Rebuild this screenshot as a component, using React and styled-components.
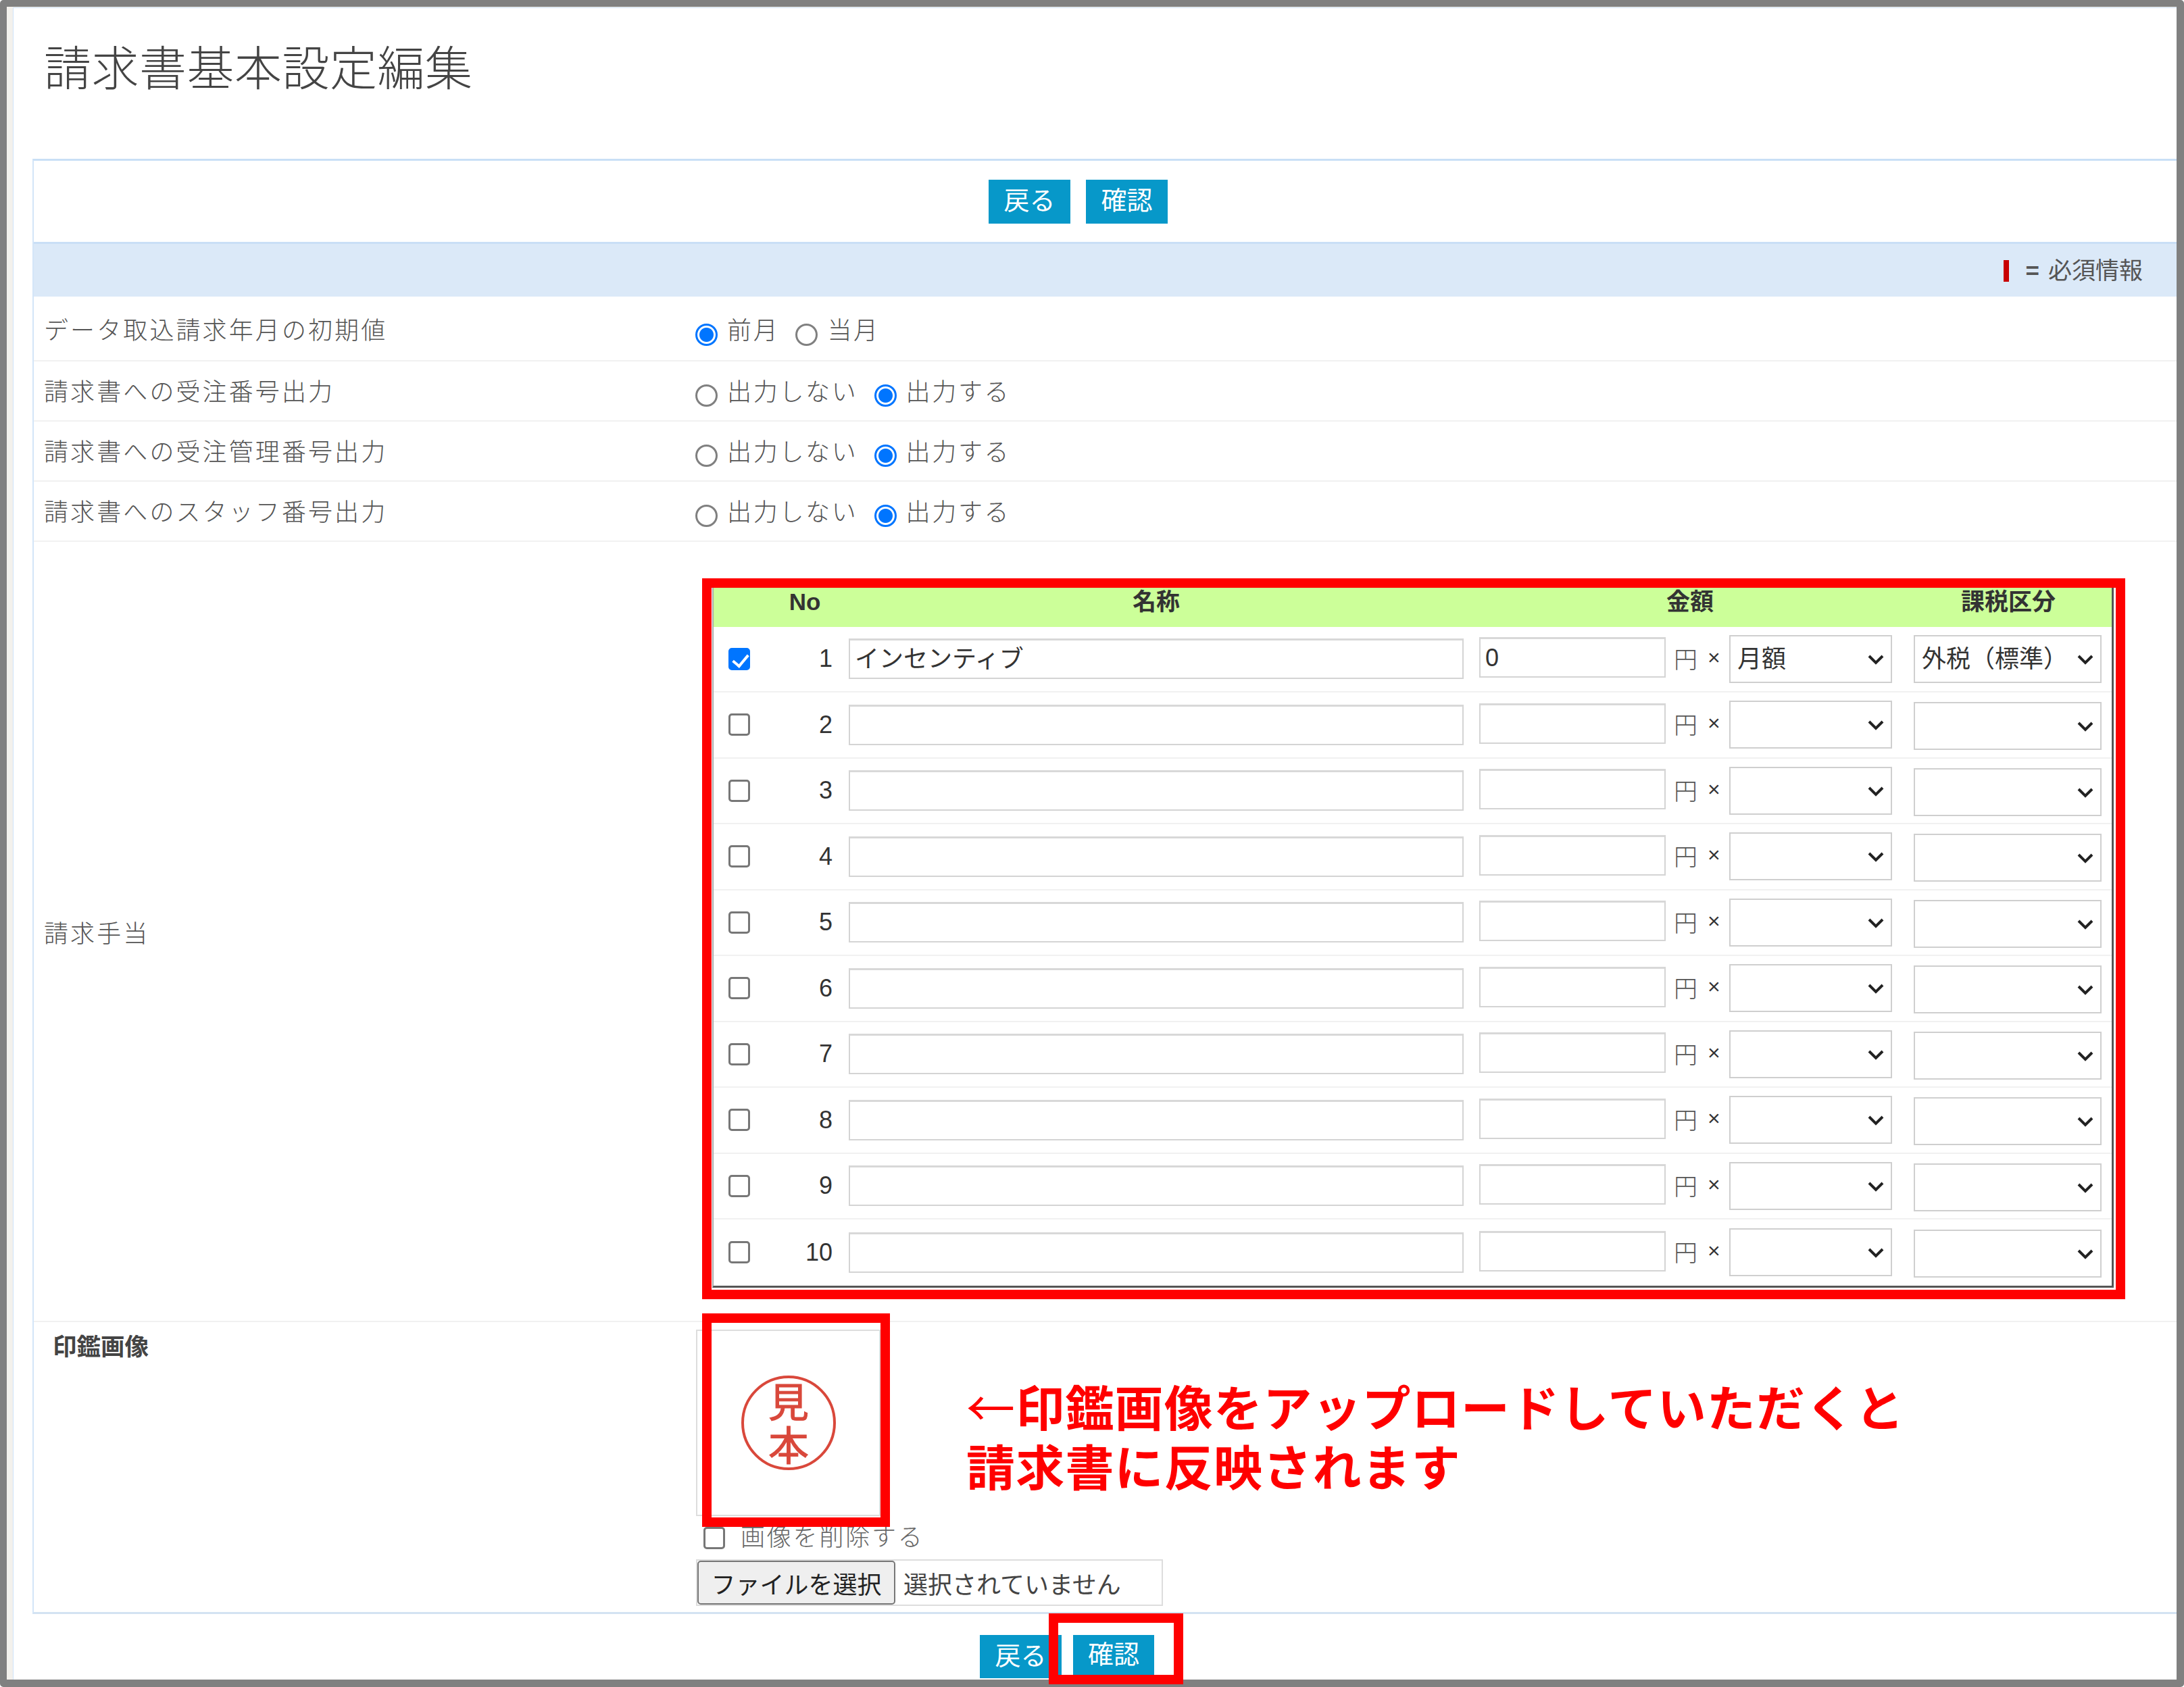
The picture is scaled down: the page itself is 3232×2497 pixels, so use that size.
import styled, { createGlobalStyle } from "styled-components";

const GlobalStyle = createGlobalStyle`
  html, body {
    margin: 0;
    padding: 0;
    background: #fff;
  }
  body {
    font-family: "Liberation Sans", "Noto Sans CJK JP", sans-serif;
    color: #555;
  }
  * {
    box-sizing: border-box;
  }
`;

const Frame = styled.div`
  width: 3232px;
  height: 2497px;
  background: #fff;
  border: solid #808080;
  border-width: 10px 11px 11px 10px;
  border-radius: 5px;
`;

const Stripe = styled.div`
  height: 100%;
  border-left: 9px solid #f3f1ec;
  border-top: 1px solid #f3f1ec;
`;

const Sheet = styled.div`
  height: 100%;
  border-left: 1px solid #cfe3f8;
  border-top: 1px solid #cfe3f8;
`;

const Title = styled.h1`
  margin: 0 0 41px;
  padding-left: 45px;
  height: 182px;
  line-height: 182px;
  font-size: 70px;
  letter-spacing: 0.5px;
  font-weight: 300;
  color: #444;
`;

const Panel = styled.section`
  margin-left: 28px;
  border-left: 2px solid #d3e5f8;
  border-top: 3px solid #c9dff6;
  border-bottom: 3px solid #d3e3f2;
`;

const ActionBar = styled.div`
  height: 120px;
  padding: 28px 0 0 1413px;
  display: flex;
  gap: 23px;
  align-items: flex-start;
`;

const ActionButton = styled.button`
  width: ${(p) => p.$width || 121}px;
  height: ${(p) => p.$height || 65}px;
  padding: 0 0 3px;
  border: none;
  background: #0798c9;
  color: #fff;
  font-family: inherit;
  font-size: 38px;
  line-height: 1;
`;

const RequiredBar = styled.div`
  height: 81px;
  padding: 2px 50px 0 0;
  background: #dbe9f8;
  border-top: 3px solid #c9dff6;
  display: flex;
  align-items: center;
  justify-content: flex-end;
  font-size: 35px;
  color: #555;
`;

const RequiredMark = styled.span`
  width: 8px;
  height: 32px;
  margin-right: 25px;
  background: #c80000;
`;

const RequiredText = styled.span`
  margin-bottom: 8px;
`;

const Equals = styled.span`
  margin-right: 13px;
  font-weight: 700;
`;

const FormRow = styled.div`
  display: grid;
  grid-template-columns: 979px 1fr;
  align-items: center;
  height: ${(p) => (p.$first ? 96 : 89)}px;
  padding-top: ${(p) => (p.$first ? 4 : 0)}px;
  padding-bottom: 4px;
  border-bottom: 2px solid #f1f1f1;
`;

const RowLabel = styled.div`
  padding-left: 15px;
  font-size: 36px;
  letter-spacing: 3.1px;
  font-weight: 300;
  color: #555;
  white-space: nowrap;
`;

const ChoiceList = styled.div`
  display: flex;
  align-items: center;
`;

const Radio = styled.input.attrs({ type: "radio" })`
  appearance: none;
  width: 33px;
  height: 33px;
  margin: 18px 14px 0 0;
  flex: none;
  border: 3px solid #808080;
  border-radius: 50%;
  background: #fff;

  &:checked {
    border-color: #0075ff;
    background: radial-gradient(circle, #0075ff 0 10px, #fff 11px);
  }
`;

const ChoiceText = styled.span`
  margin-right: 24px;
  font-size: 36px;
  letter-spacing: 2.7px;
  font-weight: 300;
  color: #555;
  white-space: nowrap;
`;

const AllowanceRow = styled.div`
  display: grid;
  grid-template-columns: 979px 1fr;
  align-items: center;
  height: 1155px;
  border-bottom: 2px solid #f1f1f1;
`;

const RedBox = styled.div`
  margin: 53px 0 32px 10px;
  width: 2106px;
  height: 1067px;
  border: 14px solid #ff0000;
`;

const FeeTable = styled.div`
  margin-left: 1px;
  width: 2074px;
  height: 1036px;
  border-left: 2px solid #aaa;
  border-right: 3px solid #555;
  border-bottom: 3px solid #555;
`;

const gridColumns = "94px 82px 934px 299px 94px 241px 310px";

const HeaderRow = styled.div`
  display: grid;
  grid-template-columns: ${gridColumns};
  height: 58px;
  padding-bottom: 16px;
  align-items: center;
  background: #ccff99;
  font-size: 35px;
  line-height: 1;
  font-weight: 700;
  color: #333;
`;

const HeaderCell = styled.div`
  grid-column: ${(p) => p.$col};
  padding-left: ${(p) => p.$pad || 0}px;
  text-align: center;
`;

const FeeRow = styled.div`
  display: grid;
  grid-template-columns: ${gridColumns};
  align-items: center;
  height: 97.5px;
  border-bottom: ${(p) => (p.$last ? "none" : "2px solid #f1f1f1")};
`;

const Check = styled.input.attrs({ type: "checkbox" })`
  appearance: none;
  position: relative;
  width: 32px;
  height: 33px;
  margin: 0 0 0 22px;
  flex: none;
  border: 3px solid #777;
  border-radius: 5px;
  background: #fff;

  &:checked {
    border-color: #0075ff;
    background: #0075ff;
  }

  &:checked::after {
    content: "";
    position: absolute;
    left: 8px;
    top: 2px;
    width: 10px;
    height: 19px;
    border: solid #fff;
    border-width: 0 4px 4px 0;
    transform: rotate(40deg);
  }
`;

const RowNumber = styled.div`
  text-align: right;
  font-size: 36px;
  color: #333;
`;

const TextField = styled.input`
  display: block;
  width: calc(100% - ${(p) => p.$pad}px);
  height: 60px;
  margin-left: ${(p) => p.$pad}px;
  padding: 0 0 8px 7px;
  border: 2px solid #d4d4d4;
  border-top: 3px solid #d8d8d8;
  border-radius: 0;
  outline: none;
  background: #fff;
  font-family: inherit;
  font-size: 36px;
  color: #333;
`;

const AmountField = styled(TextField)`
  margin-bottom: 4px;
  padding-bottom: 0;
`;

const YenCell = styled.div`
  display: flex;
  align-items: center;
  padding: 0 0 4px 12px;
  font-size: 35px;
  font-weight: 300;
  color: #555;
`;

const Times = styled.span`
  margin-left: 15px;
  font-size: 32px;
  font-weight: 400;
  color: #333;
`;

const SelectWrap = styled.div`
  position: relative;
  margin-left: ${(p) => p.$pad || 0}px;
  margin-top: ${(p) => p.$drop || 0}px;
`;

const Select = styled.select`
  display: block;
  width: 100%;
  height: 71px;
  padding: 0 0 0 10px;
  border: 2px solid #cfcfcf;
  border-radius: 0;
  outline: none;
  appearance: none;
  background: #fff;
  font-family: inherit;
  font-size: 36px;
  color: #333;
`;

const Chevron = styled.svg`
  position: absolute;
  top: 28px;
  right: 12px;
  width: 24px;
  height: 16px;
  pointer-events: none;
`;

const StampRow = styled.div`
  display: grid;
  grid-template-columns: 979px 1fr;
  align-items: start;
  height: 429px;
`;

const StampLabel = styled.div`
  padding: 8px 0 0 28px;
  font-size: 35.5px;
  font-weight: 700;
  color: #444;
`;

const StampCell = styled.div`
  padding-top: 11px;
`;

const StampTop = styled.div`
  display: flex;
  align-items: center;
`;

const StampBox = styled.div`
  position: relative;
  width: 273px;
  height: 276px;
  margin-left: 1px;
  border: 2px solid #ddd;
  display: flex;
  align-items: center;
  justify-content: center;
`;

const StampHighlight = styled.div`
  position: absolute;
  left: 7px;
  top: -26px;
  width: 278px;
  height: 316px;
  border: 14px solid #ff0000;
  z-index: 2;
`;

const StampSvg = styled.svg`
  width: 142px;
  height: 142px;
  overflow: visible;
`;

const StampText = styled.text`
  font-family: "Noto Sans CJK JP", sans-serif;
  font-size: 60px;
  fill: #d9483b;
  stroke: #d9483b;
  stroke-width: 1px;
  text-anchor: middle;
`;

const Annotation = styled.div`
  margin: 36px 0 0 127px;
  font-family: "Noto Sans CJK JP", sans-serif;
  font-size: 72px;
  line-height: 88px;
  letter-spacing: 1.2px;
  font-weight: 700;
  color: #ff0000;
  white-space: nowrap;
`;

const ArrowGlyph = styled.span`
  font-weight: 400;
`;

const DeleteLine = styled.label`
  display: flex;
  align-items: center;
  height: 34px;
  margin: 15px 0 15px 12px;
  font-size: 36px;
  letter-spacing: 2.8px;
  font-weight: 300;
  color: #666;
`;

const DeleteText = styled.span`
  margin-bottom: 8px;
`;

const DeleteCheck = styled(Check)`
  margin: 0 23px 0 0;
`;

const FilePicker = styled.div`
  display: flex;
  align-items: center;
  width: 691px;
  height: 69px;
  margin-left: 1px;
  border: 2px solid #ddd;
  font-size: 36px;
  color: #444;
`;

const FileButton = styled.button`
  width: 293px;
  height: 65px;
  margin-right: 12px;
  padding: 0;
  border: 2px solid #777;
  border-radius: 5px;
  background: #efefef;
  font-family: inherit;
  font-size: 36px;
  color: #222;
`;

const Footer = styled.div`
  display: flex;
  gap: 17px;
  padding: 31px 0 0 1430px;
`;

const ConfirmSlot = styled.div`
  position: relative;
`;

const ConfirmHighlight = styled.div`
  position: absolute;
  left: -36px;
  top: -32px;
  width: 199px;
  height: 105px;
  border: 14px solid #ff0000;
  z-index: 2;
`;

const settings = [
  { label: "データ取込請求年月の初期値", choices: ["前月", "当月"], picked: 0 },
  { label: "請求書への受注番号出力", choices: ["出力しない", "出力する"], picked: 1 },
  { label: "請求書への受注管理番号出力", choices: ["出力しない", "出力する"], picked: 1 },
  { label: "請求書へのスタッフ番号出力", choices: ["出力しない", "出力する"], picked: 1 },
];

const DownArrow = () => (
  <Chevron viewBox="0 0 24 16">
    <path d="M2 3l10 10L22 3" fill="none" stroke="#222" strokeWidth="4" />
  </Chevron>
);

const FeeLine = ({ no }) => {
  const first = no === 1;
  return (
    <FeeRow $last={no === 10}>
      <Check defaultChecked={first} />
      <RowNumber>{no}</RowNumber>
      <TextField $pad={24} defaultValue={first ? "インセンティブ" : ""} />
      <AmountField $pad={23} defaultValue={first ? "0" : ""} />
      <YenCell>
        円<Times>×</Times>
      </YenCell>
      <SelectWrap>
        <Select defaultValue={first ? "月額" : ""}>
          <option value=""></option>
          <option value="月額">月額</option>
        </Select>
        <DownArrow />
      </SelectWrap>
      <SelectWrap $pad={32} $drop={first ? 0 : 4}>
        <Select defaultValue={first ? "外税" : ""}>
          <option value=""></option>
          <option value="外税">外税（標準）</option>
        </Select>
        <DownArrow />
      </SelectWrap>
    </FeeRow>
  );
};

const App = () => {
  return (
    <Frame>
      <GlobalStyle />
      <Stripe>
        <Sheet>
          <Title>請求書基本設定編集</Title>
          <Panel>
            <ActionBar>
              <ActionButton type="button">戻る</ActionButton>
              <ActionButton type="button">確認</ActionButton>
            </ActionBar>
            <RequiredBar>
              <RequiredMark />
              <RequiredText>
                <Equals>=</Equals>必須情報
              </RequiredText>
            </RequiredBar>
            {settings.map((row, i) => (
              <FormRow key={row.label} $first={i === 0}>
                <RowLabel>{row.label}</RowLabel>
                <ChoiceList>
                  {row.choices.map((choice, j) => (
                    <ChoiceList as="label" key={choice}>
                      <Radio name={`setting-${i}`} defaultChecked={j === row.picked} />
                      <ChoiceText>{choice}</ChoiceText>
                    </ChoiceList>
                  ))}
                </ChoiceList>
              </FormRow>
            ))}
            <AllowanceRow>
              <RowLabel>請求手当</RowLabel>
              <RedBox>
                <FeeTable>
                  <HeaderRow>
                    <HeaderCell $col="2">No</HeaderCell>
                    <HeaderCell $col="3" $pad={24}>名称</HeaderCell>
                    <HeaderCell $col="4 / 7" $pad={36}>金額</HeaderCell>
                    <HeaderCell $col="7" $pad={34}>課税区分</HeaderCell>
                  </HeaderRow>
                  {Array.from({ length: 10 }, (_, i) => (
                    <FeeLine key={i} no={i + 1} />
                  ))}
                </FeeTable>
              </RedBox>
            </AllowanceRow>
            <StampRow>
              <StampLabel>印鑑画像</StampLabel>
              <StampCell>
                <StampTop>
                  <StampBox>
                    <StampSvg viewBox="0 0 142 142">
                      <circle cx="71" cy="71" r="68" fill="none" stroke="#d9483b" strokeWidth="4" />
                      <StampText x="71" y="63">見</StampText>
                      <StampText x="71" y="127">本</StampText>
                    </StampSvg>
                    <StampHighlight />
                  </StampBox>
                  <Annotation>
                    <ArrowGlyph>←</ArrowGlyph>印鑑画像をアップロードしていただくと
                    <br />
                    請求書に反映されます
                  </Annotation>
                </StampTop>
                <DeleteLine>
                  <DeleteCheck />
                  <DeleteText>画像を削除する</DeleteText>
                </DeleteLine>
                <FilePicker>
                  <FileButton type="button">ファイルを選択</FileButton>
                  選択されていません
                </FilePicker>
              </StampCell>
            </StampRow>
          </Panel>
          <Footer>
            <ActionButton type="button" $height={64}>戻る</ActionButton>
            <ConfirmSlot>
              <ActionButton type="button" $width={120} $height={60}>確認</ActionButton>
              <ConfirmHighlight />
            </ConfirmSlot>
          </Footer>
        </Sheet>
      </Stripe>
    </Frame>
  );
};

export default App;
